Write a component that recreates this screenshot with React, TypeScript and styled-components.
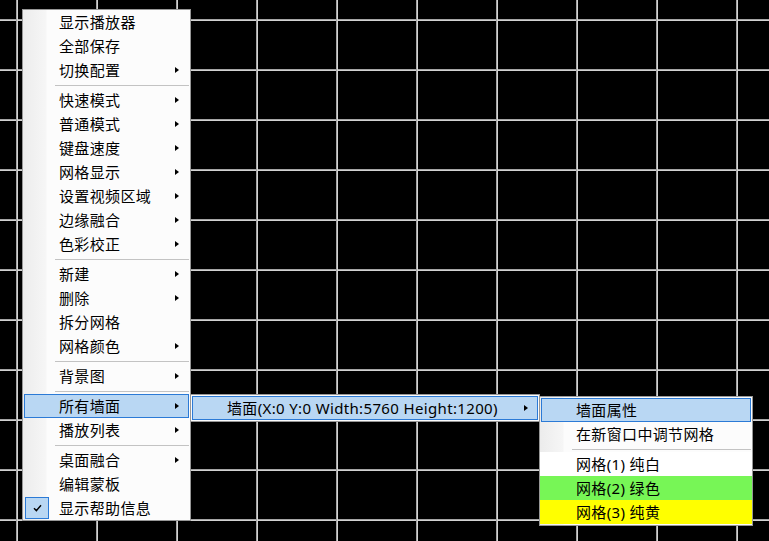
import styled, { createGlobalStyle } from "styled-components";

type Item =
    | { kind: "sep" }
    | {
          kind: "item";
          label: string;
          arrow?: boolean;
          active?: boolean;
          checked?: boolean;
          fill?: string;
      };

const item = (label: string, opts: Partial<Omit<Extract<Item, { kind: "item" }>, "kind" | "label">> = {}): Item => ({
    kind: "item",
    label,
    ...opts,
});
const sep: Item = { kind: "sep" };

const mainMenu: Item[] = [
    item("显示播放器"),
    item("全部保存"),
    item("切换配置", { arrow: true }),
    sep,
    item("快速模式", { arrow: true }),
    item("普通模式", { arrow: true }),
    item("键盘速度", { arrow: true }),
    item("网格显示", { arrow: true }),
    item("设置视频区域", { arrow: true }),
    item("边缘融合", { arrow: true }),
    item("色彩校正", { arrow: true }),
    sep,
    item("新建", { arrow: true }),
    item("删除", { arrow: true }),
    item("拆分网格"),
    item("网格颜色", { arrow: true }),
    sep,
    item("背景图", { arrow: true }),
    sep,
    item("所有墙面", { arrow: true, active: true }),
    item("播放列表", { arrow: true }),
    sep,
    item("桌面融合", { arrow: true }),
    item("编辑蒙板"),
    item("显示帮助信息", { checked: true }),
];

const wallMenu: Item[] = [
    item("墙面(X:0 Y:0 Width:5760 Height:1200)", { arrow: true, active: true }),
];

const wallPropsMenu: Item[] = [
    item("墙面属性", { active: true }),
    item("在新窗口中调节网格"),
    sep,
    item("网格(1) 纯白", { fill: "#ffffff" }),
    item("网格(2) 绿色", { fill: "#77f656" }),
    item("网格(3) 纯黄", { fill: "#ffff00" }),
];

const MenuList = ({ items }: { items: Item[] }) => (
    <>
        {items.map((it, i) =>
            it.kind === "sep" ? (
                <Separator key={i} />
            ) : (
                <MenuItem key={i} $active={it.active} $fill={it.fill}>
                    <IconCell>
                        {it.checked && (
                            <CheckBox>
                                <svg width="9" height="8" viewBox="0 0 9 8">
                                    <path d="M1 4.2 L3.4 6.6 L8 1.2" fill="none" stroke="#000" strokeWidth="1.4" />
                                </svg>
                            </CheckBox>
                        )}
                    </IconCell>
                    <Label>{it.label}</Label>
                    {it.arrow && <Arrow />}
                </MenuItem>
            )
        )}
    </>
);

const App = () => {
    return (
        <>
            <GlobalStyle />
            <Desktop>
                <PopupMenu $left={22} $top={9} $width={169} $gutter $padY={0}>
                    <MenuList items={mainMenu} />
                </PopupMenu>
                <PopupMenu $left={190} $top={394} $width={350} $padY={1}>
                    <MenuList items={wallMenu} />
                </PopupMenu>
                <PopupMenu $left={539} $top={396} $width={214} $gutter $padY={1}>
                    <MenuList items={wallPropsMenu} />
                </PopupMenu>
            </Desktop>
        </>
    );
};

export default App;

const GlobalStyle = createGlobalStyle`
    html, body {
        margin: 0;
        padding: 0;
        background: #000;
    }
    body {
        font-family: "Noto Sans", "Noto Sans CJK SC", sans-serif;
    }
`;

const Desktop = styled.div`
    position: relative;
    width: 100vw;
    height: 100vh;
    overflow: hidden;

    background-color: #000;
    background-image:
        linear-gradient(to right, #a4a4a4 0 1px, #d2d2d2 1px 2px, transparent 2px),
        linear-gradient(to bottom, #a4a4a4 0 1px, #d2d2d2 1px 2px, transparent 2px);
    background-size: 80px 50px;
    background-position: 16px 19px;
`;

const PopupMenu = styled.div<{ $left: number; $top: number; $width: number; $gutter?: boolean; $padY: number }>`
    position: absolute;
    left: ${(p) => p.$left}px;
    top: ${(p) => p.$top}px;
    width: ${(p) => p.$width}px;
    box-sizing: border-box;
    padding: ${(p) => p.$padY}px 1px;

    display: flex;
    flex-direction: column;

    border: 1px solid #979797;
    background: ${(p) =>
        p.$gutter
            ? "linear-gradient(to right, #ececec 0, #f6f6f6 23px, #fcfcfc 24px, #fcfcfc 100%)"
            : "#fcfcfc"};
`;

const MenuItem = styled.div<{ $active?: boolean; $fill?: string }>`
    display: flex;
    align-items: center;
    height: 24px;
    box-sizing: border-box;
    padding-right: 9px;

    border: 1px solid ${(p) => (p.$active ? "#2b7ad6" : "transparent")};
    background: ${(p) => (p.$active ? "#b9d7f3" : p.$fill ?? "transparent")};
    margin: ${(p) => (p.$fill ? "0 -1px" : "0")};
    padding-left: ${(p) => (p.$fill ? "1px" : "0")};

    color: #000;
    font-size: 15px;
    line-height: 21px;
`;

const IconCell = styled.div`
    flex: 0 0 34px;
    height: 22px;
    display: flex;
    align-items: flex-start;
`;

const CheckBox = styled.div`
    width: 24px;
    height: 22px;
    box-sizing: border-box;
    border: 1px solid #2b7ad6;
    background: #b9d7f3;

    display: flex;
    align-items: center;
    justify-content: center;
`;

const Label = styled.span`
    flex: 1;
    white-space: nowrap;
    letter-spacing: 0.35px;
`;

const Arrow = styled.span`
    width: 0;
    height: 0;
    border-top: 3.5px solid transparent;
    border-bottom: 3.5px solid transparent;
    border-left: 4px solid #000;
`;

const Separator = styled.div`
    height: 6px;
    display: flex;
    align-items: center;

    &::after {
        content: "";
        flex: 1;
        height: 1px;
        margin-left: 31px;
        background: #c3c3c3;
    }
`;
